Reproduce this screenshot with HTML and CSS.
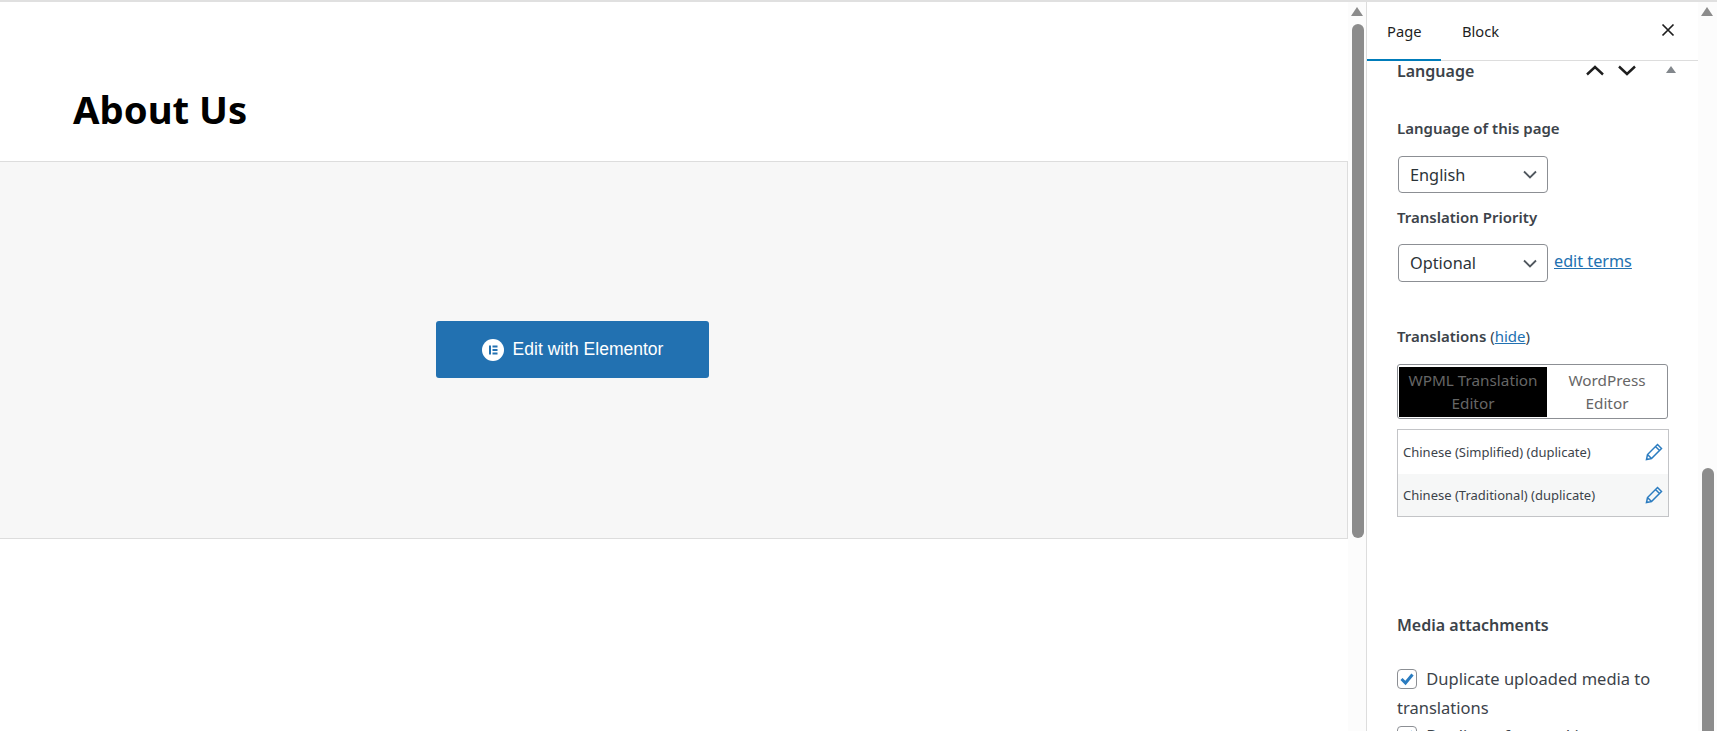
FILE: index.html
```html
<!DOCTYPE html>
<html lang="en">
<head>
  <meta charset="UTF-8">
  <meta name="viewport" content="width=device-width, initial-scale=1.0">
  <title>About Us</title>
  <link rel="stylesheet" href="styles.css">
</head>
<body>

<div class="app">
  <div class="editor">
    <h1 class="page-title">About Us</h1>
    <div class="elementor-block">
      <button class="elementor-btn">
        <svg class="elementor-icon" width="22" height="22" viewBox="0 0 22 22">
          <circle cx="11" cy="11" r="11" fill="#fff"/>
          <rect x="7" y="6.5" width="2" height="9" fill="#2271b1"/>
          <rect x="10.5" y="6.5" width="5" height="2" fill="#2271b1"/>
          <rect x="10.5" y="10" width="5" height="2" fill="#2271b1"/>
          <rect x="10.5" y="13.5" width="5" height="2" fill="#2271b1"/>
        </svg>
        Edit with Elementor
      </button>
    </div>
  </div>

  <div class="scrollbar scrollbar-editor">
    <div class="scroll-arrow"></div>
    <div class="scroll-thumb thumb-editor"></div>
  </div>

  <div class="sidebar">
    <div class="sidebar-tabs">
      <div class="tab tab-active">Page</div>
      <div class="tab tab-block">Block</div>
      <svg class="close-icon" width="14" height="14" viewBox="0 0 14 14">
        <path d="M1.5 1.5 L12.5 12.5 M12.5 1.5 L1.5 12.5" stroke="#1e1e1e" stroke-width="1.7" fill="none"/>
      </svg>
    </div>

    <div class="sidebar-body">
      <div class="panel-head">
        <h2 class="panel-title">Language</h2>
        <svg class="chevron chevron-up" width="18" height="11" viewBox="0 0 18 11">
          <path d="M1 9.5 L9 2 L17 9.5" stroke="#1e1e1e" stroke-width="2.4" fill="none"/>
        </svg>
        <svg class="chevron chevron-down" width="18" height="11" viewBox="0 0 18 11">
          <path d="M1 1.5 L9 9 L17 1.5" stroke="#1e1e1e" stroke-width="2.4" fill="none"/>
        </svg>
        <div class="panel-toggle"></div>
      </div>

      <p class="field-label label-language">Language of this page</p>
      <div class="select select-language">
        <span>English</span>
        <svg width="14" height="9" viewBox="0 0 14 9"><path d="M1 1.5 L7 7.5 L13 1.5" stroke="#50575e" stroke-width="1.8" fill="none"/></svg>
      </div>

      <p class="field-label label-priority">Translation Priority</p>
      <div class="priority-row">
        <div class="select select-priority">
          <span>Optional</span>
          <svg width="14" height="9" viewBox="0 0 14 9"><path d="M1 1.5 L7 7.5 L13 1.5" stroke="#50575e" stroke-width="1.8" fill="none"/></svg>
        </div>
        <a class="link edit-terms" href="#">edit terms</a>
      </div>

      <p class="field-label label-translations">Translations <span class="normal">(<a class="link" href="#">hide</a>)</span></p>

      <div class="editor-switch">
        <div class="switch-option switch-active">WPML Translation Editor</div>
        <div class="switch-option">WordPress Editor</div>
      </div>

      <div class="lang-table">
        <div class="lang-row">
          <span>Chinese (Simplified) (duplicate)</span>
          <svg class="pencil" width="18" height="18" viewBox="0 0 18 18">
            <path d="M1.5 16.5 L2.5 11.5 L12.5 1.5 L16.5 5.5 L6.5 15.5 Z M2.5 11.5 L6.5 15.5 M10.5 3.5 L14.5 7.5" stroke="#2b7cc0" stroke-width="1.5" fill="none"/>
          </svg>
        </div>
        <div class="lang-row lang-row-alt">
          <span>Chinese (Traditional) (duplicate)</span>
          <svg class="pencil" width="18" height="18" viewBox="0 0 18 18">
            <path d="M1.5 16.5 L2.5 11.5 L12.5 1.5 L16.5 5.5 L6.5 15.5 Z M2.5 11.5 L6.5 15.5 M10.5 3.5 L14.5 7.5" stroke="#2b7cc0" stroke-width="1.5" fill="none"/>
          </svg>
        </div>
      </div>

      <h2 class="panel-title media-title">Media attachments</h2>

      <div class="check-line">
        <span class="checkbox">
          <svg width="16" height="14" viewBox="0 0 16 14"><path d="M2.5 7 L6.5 11 L13.5 2.5" stroke="#2b7cc0" stroke-width="3" fill="none"/></svg>
        </span>
        Duplicate uploaded media to translations
      </div>
      <div class="check-line">
        <span class="checkbox">
          <svg width="16" height="14" viewBox="0 0 16 14"><path d="M2.5 7 L6.5 11 L13.5 2.5" stroke="#2b7cc0" stroke-width="3" fill="none"/></svg>
        </span>
        Duplicate featured image to translations
      </div>
    </div>
  </div>

  <div class="scrollbar">
    <div class="scroll-arrow"></div>
    <div class="scroll-thumb thumb-sidebar"></div>
  </div>
</div>

</body>
</html>
```

FILE: styles.css
```css
* {
  box-sizing: border-box;
}

html, body {
  height: 100%;
}

body {
  margin: 0;
  overflow: hidden;
  background-color: #fff;
  font-family: "Noto Sans", sans-serif;
  color: #3c434a;
}

.app {
  display: flex;
  height: 731px;
  border-top: 2px solid #e0e0e0;
  overflow: hidden;
}

.editor {
  width: 1348px;
  flex: none;
  overflow: hidden;
}

.page-title {
  margin: 0;
  padding: 81px 0 0 73px;
  height: 159px;
  font-size: 38.3px;
  line-height: 53px;
  font-weight: 700;
  color: #000;
}

.elementor-block {
  height: 378px;
  background-color: #f7f7f7;
  border: 1px solid #ddd;
  border-left: none;
  display: flex;
  justify-content: center;
  padding: 159px 202px 0 0;
}

.elementor-btn {
  width: 273px;
  height: 57px;
  background-color: #2271b1;
  color: #fff;
  border: none;
  border-radius: 3px;
  display: flex;
  align-items: center;
  justify-content: center;
  gap: 9px;
  font-family: "Liberation Sans", Arial, sans-serif;
  font-size: 17.5px;
}

.scrollbar {
  width: 19px;
  flex: none;
  background-color: #fcfcfc;
  padding-top: 5px;
}

.scrollbar-editor {
  width: 18px;
}

.scroll-arrow {
  width: 0;
  height: 0;
  margin-left: 3px;
  border-left: 6px solid transparent;
  border-right: 6px solid transparent;
  border-bottom: 9px solid #8c8c8c;
}

.scroll-thumb {
  width: 12px;
  margin-left: 4px;
  background-color: #8c8c8c;
  border-radius: 6px;
}

.thumb-editor {
  height: 514px;
  margin-top: 8px;
}

.thumb-sidebar {
  height: 300px;
  margin-top: 452px;
}

.sidebar {
  width: 332px;
  flex: none;
  border-left: 1px solid #ddd;
  overflow: hidden;
}

.sidebar-tabs {
  display: flex;
  height: 59px;
  border-bottom: 1px solid #ddd;
  font-size: 14.7px;
  position: relative;
}

.tab {
  padding: 19px 20px 0;
  color: #1e1e1e;
  line-height: 20px;
}

.tab-active {
  width: 74px;
  border-bottom: 2px solid #007cba;
  height: 59px;
}

.tab-block {
  padding-left: 21px;
}

.close-icon {
  position: absolute;
  left: 294px;
  top: 21px;
}

.sidebar-body {
  padding: 0 0 0 30px;
}

.panel-head {
  display: flex;
  align-items: center;
  height: 21px;
  position: relative;
}

.panel-title {
  margin: 0;
  font-size: 16px;
  font-weight: 600;
  color: #3c434a;
}

.panel-head .panel-title {
  margin-bottom: 2px;
}

.chevron {
  position: absolute;
  top: 4px;
}

.chevron-up {
  left: 189px;
}

.chevron-down {
  left: 221px;
}

.panel-toggle {
  position: absolute;
  left: 269px;
  top: 5px;
  border-left: 5px solid transparent;
  border-right: 5px solid transparent;
  border-bottom: 7px solid #82878c;
}

.field-label {
  margin: 0;
  font-size: 15px;
  line-height: 20px;
  font-weight: 600;
}

.normal {
  font-weight: 400;
}

.label-language {
  margin-top: 36px;
}

.select {
  width: 150px;
  height: 37px;
  border: 1px solid #8c8f94;
  border-radius: 4px;
  display: flex;
  align-items: center;
  justify-content: space-between;
  padding: 0 10px 0 11px;
  font-size: 16.3px;
  background-color: #fff;
  color: #2c3338;
}

.select-language {
  margin-top: 18px;
  margin-left: 1px;
}

.select-priority {
  height: 38px;
  margin-left: 1px;
}

.label-priority {
  margin-top: 14px;
}

.priority-row {
  display: flex;
  margin-top: 17px;
  gap: 6px;
}

.link {
  color: #2271b1;
  text-decoration: underline;
}

.edit-terms {
  font-size: 16.2px;
  line-height: 35px;
}

.label-translations {
  margin-top: 44px;
}

.editor-switch {
  width: 271px;
  height: 55px;
  margin-top: 18px;
  border: 1px solid #8c8f94;
  border-radius: 3px;
  padding: 2px 1px;
  display: flex;
  font-size: 15.3px;
  line-height: 23px;
  color: #666;
  text-align: center;
}

.switch-option {
  flex: none;
  width: 148px;
  height: 50px;
  padding: 2px 4px;
}

.switch-option:last-child {
  width: 120px;
  padding: 2px 20px;
}

.switch-active {
  background-color: #000;
}

.lang-table {
  width: 272px;
  height: 88px;
  margin-top: 10px;
  border: 1px solid #c3c4c7;
  font-size: 13px;
}

.lang-row {
  height: 44px;
  display: flex;
  align-items: center;
  justify-content: space-between;
  padding: 0 5px;
}

.lang-row-alt {
  background-color: #f6f7f7;
  height: 42px;
}

.media-title {
  margin-top: 97px;
  line-height: 22px;
}

.check-line {
  margin-top: 29px;
  font-size: 16.5px;
  line-height: 28.5px;
  width: 270px;
}

.check-line + .check-line {
  margin-top: 0;
}

.checkbox {
  display: inline-flex;
  align-items: center;
  justify-content: center;
  width: 20px;
  height: 20px;
  border: 1px solid #8c8f94;
  border-radius: 4px;
  margin-right: 5px;
  vertical-align: -1px;
}
```
